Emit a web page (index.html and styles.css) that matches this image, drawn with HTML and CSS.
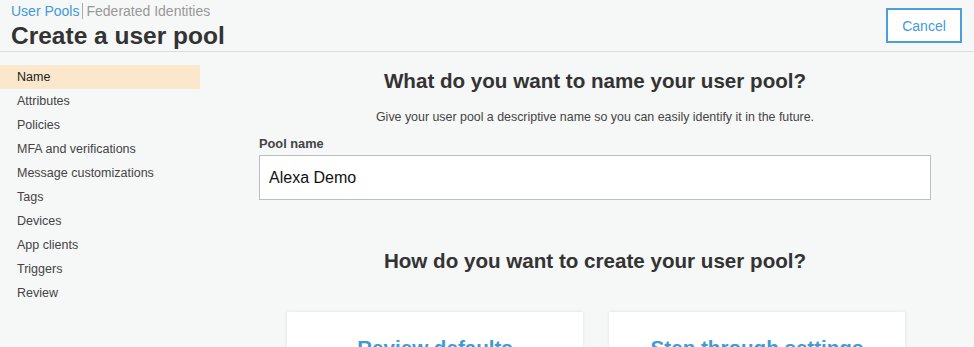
FILE: index.html
```html
<!DOCTYPE html>
<html lang="en">
<head>
    <meta charset="UTF-8">
    <title>Create a user pool</title>
    <link rel="stylesheet" href="styles.css">
</head>
<body>
    <header class="top-bar">
        <div class="title-block">
            <nav class="crumbs">
                <a class="crumb active" href="#">User Pools</a>
                <a class="crumb" href="#">Federated Identities</a>
            </nav>
            <h1 class="page-title">Create a user pool</h1>
        </div>
        <button class="cancel-btn">Cancel</button>
    </header>

    <div class="layout">
        <aside class="steps">
            <div class="step current">Name</div>
            <div class="step">Attributes</div>
            <div class="step">Policies</div>
            <div class="step">MFA and verifications</div>
            <div class="step">Message customizations</div>
            <div class="step">Tags</div>
            <div class="step">Devices</div>
            <div class="step">App clients</div>
            <div class="step">Triggers</div>
            <div class="step">Review</div>
        </aside>

        <main class="content">
            <h2 class="question">What do you want to name your user pool?</h2>
            <p class="hint">Give your user pool a descriptive name so you can easily identify it in the future.</p>

            <label class="field-label" for="pool-name">Pool name</label>
            <input class="field-input" id="pool-name" type="text" value="Alexa Demo">

            <h2 class="question second">How do you want to create your user pool?</h2>

            <div class="choices">
                <div class="choice">Review defaults</div>
                <div class="choice">Step through settings</div>
            </div>
        </main>
    </div>
</body>
</html>
```

FILE: styles.css
```css
* {
    margin: 0;
    padding: 0;
    box-sizing: border-box;
    font-family: "Liberation Sans", Arial, sans-serif;
}

body {
    background-color: #f6f7f7;
    color: #333;
    height: 100vh;
    overflow: hidden;
}

.top-bar {
    display: flex;
    justify-content: space-between;
    align-items: flex-start;
    height: 52px;
    border-bottom: 1px solid #dcdede;
    padding: 0 12px 0 11px;
}

.title-block {
    padding-top: 3px;
}

.crumbs {
    display: flex;
    align-items: center;
    font-size: 14px;
    line-height: 16px;
}

.crumb {
    color: #999;
    text-decoration: none;
}

.crumb.active {
    color: #3f9ad8;
    padding-right: 3px;
    margin-right: 3px;
    border-right: 1px solid #aaa;
}

.page-title {
    font-size: 24.5px;
    line-height: 30px;
    font-weight: bold;
    color: #333;
    margin-top: 2px;
}

.cancel-btn {
    margin-top: 8px;
    width: 76px;
    height: 35px;
    background: #fff;
    border: 2px solid #4a9fdc;
    color: #3f9ad8;
    font-size: 14px;
    cursor: pointer;
}

.layout {
    display: flex;
}

.steps {
    width: 200px;
    padding-top: 13px;
}

.step {
    height: 24px;
    line-height: 24px;
    padding-left: 17px;
    font-size: 12.5px;
    color: #444;
}

.step.current {
    background-color: #fbe8cc;
    color: #222;
}

.content {
    width: 672px;
    margin-left: 59px;
    display: flex;
    flex-direction: column;
}

.question {
    text-align: center;
    font-size: 20.6px;
    line-height: 24px;
    font-weight: bold;
    color: #333;
    margin-top: 17px;
}

.question.second {
    margin-top: 49px;
}

.hint {
    text-align: center;
    font-size: 12.4px;
    line-height: 16px;
    color: #444;
    margin-top: 16px;
}

.field-label {
    font-size: 12.8px;
    line-height: 16px;
    font-weight: bold;
    color: #444;
    margin-top: 11px;
}

.field-input {
    margin-top: 3px;
    height: 45px;
    border: 1px solid #bdbdbd;
    background: #fff;
    padding: 0 9px;
    font-size: 16px;
    color: #111;
    outline: none;
}

.choices {
    display: flex;
    justify-content: center;
    gap: 26px;
    margin-top: 39px;
    padding-left: 2px;
}

.choice {
    width: 296px;
    height: 120px;
    background: #fff;
    box-shadow: 0 0 3px rgba(0, 0, 0, 0.1);
    text-align: center;
    padding-top: 24px;
    font-size: 20.6px;
    font-weight: bold;
    color: #3f9ad8;
}
```
